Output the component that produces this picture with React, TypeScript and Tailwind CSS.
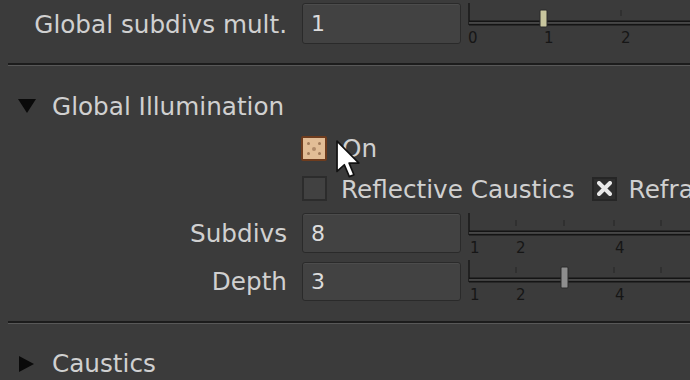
const font = "font-['DejaVu_Sans',sans-serif]";

function Separator() {
  return (
    <div className="ml-[8px]">
      <div className="h-[2px] bg-[#1c1c1c]" />
      <div className="h-[1px] bg-[#585858]" />
    </div>
  );
}

function NumField({ value, h }: { value: string; h: string }) {
  return (
    <div
      className={`ml-[15px] w-[159px] shrink-0 ${h} rounded-[3px] border border-[#2a2a2a] bg-[#424242] shadow-[inset_0_1px_0_#4c4c4c] flex items-center pl-[8px] text-[22px] text-[#dcdcdc]`}
    >
      {value}
    </div>
  );
}

function Slider({
  rail,
  ticks,
  labels,
  handle,
  handleColor,
}: {
  rail: number;
  ticks: number[];
  labels: [string, number][];
  handle?: [number, number, number];
  handleColor?: string;
}) {
  return (
    <svg width="222" height="44" className="ml-[6px] overflow-visible shrink-0">
      <line x1="2" y1={rail - 18} x2="2" y2={rail + 4} stroke="#1a1a1a" strokeWidth="1.5" />
      {ticks.map((t) => (
        <line key={t} x1={t} y1={rail - 11} x2={t} y2={rail - 5} stroke="#262626" strokeWidth="1" />
      ))}
      <rect x="2" y={rail - 0.5} width="230" height="1.6" fill="#141414" />
      <rect x="2" y={rail + 1.1} width="230" height="1.8" fill="#4a4a4a" />
      <rect x="2" y={rail + 2.9} width="230" height="1.6" fill="#141414" />
      {handle && (
        <rect
          x={handle[0]}
          y={handle[1]}
          width="7"
          height={handle[2]}
          rx="1"
          fill={handleColor}
          stroke="#2a2a2a"
          strokeWidth="1"
        />
      )}
      {labels.map(([l, x]) => (
        <text key={l} x={x} y={rail + 22} fontSize="15" fill="#161616" fontFamily="DejaVu Sans, sans-serif">
          {l}
        </text>
      ))}
    </svg>
  );
}

function OnBox() {
  return (
    <div className="w-[26px] h-[25px] shrink-0 rounded-[2px] border-2 border-[#6e3c1e] bg-[#e2bd96] relative">
      <span className="absolute left-[4px] top-[4px] w-[3px] h-[3px] rounded-full bg-[#a07a5a]" />
      <span className="absolute right-[4px] top-[4px] w-[3px] h-[3px] rounded-full bg-[#a07a5a]" />
      <span className="absolute left-[9px] top-[9px] w-[4px] h-[4px] rounded-full bg-[#b08a68]" />
      <span className="absolute left-[4px] bottom-[4px] w-[3px] h-[3px] rounded-full bg-[#a07a5a]" />
      <span className="absolute right-[4px] bottom-[4px] w-[3px] h-[3px] rounded-full bg-[#a07a5a]" />
    </div>
  );
}

function EmptyBox() {
  return <div className="w-[25px] h-[25px] shrink-0 border-2 border-[#2c2c2c] bg-[#414141]" />;
}

function XBox() {
  return (
    <div className="w-[25px] h-[24px] shrink-0 border-2 border-[#262626] bg-[#2e2e2e] flex items-center justify-center">
      <svg width="15" height="15" viewBox="0 0 15 15">
        <path d="M2 2 L13 13 M13 2 L2 13" stroke="#e8e8e8" strokeWidth="4" strokeLinecap="round" />
      </svg>
    </div>
  );
}

export default function App() {
  return (
    <div className={`relative w-[690px] h-[380px] overflow-hidden bg-[#3b3b3b] text-[#d0d0d0] ${font}`}>
      {/* global subdivs */}
      <div className="flex items-start h-[47px] pt-[3px]">
        <div className="w-[287px] shrink-0 h-[43px] flex items-center justify-end text-[24.7px] whitespace-nowrap">
          Global subdivs mult.
        </div>
        <NumField value="1" h="h-[41px]" />
        <Slider
          rail={18}
          ticks={[154]}
          labels={[
            ["0", 1],
            ["1", 77],
            ["2", 154],
          ]}
          handle={[73, 7, 17]}
          handleColor="#c8c69e"
        />
      </div>

      <div className="mt-[16px]">
        <Separator />
      </div>

      {/* GI header */}
      <div className="mt-[26px] h-[30px] flex items-center">
        <svg width="18" height="14" viewBox="0 0 18 14" className="ml-[18px] shrink-0 mt-[-2px]">
          <path d="M0 0 H18 L9 14 Z" fill="#0a0a0a" />
        </svg>
        <span className="ml-[16px] text-[24.7px]">Global Illumination</span>
      </div>

      <div className="mt-[13px] h-[26px] flex items-center pl-[301px]">
        <OnBox />
        <span className="ml-[15px] text-[24.7px] mt-[2px]">On</span>
      </div>

      <div className="mt-[15px] h-[25px] flex items-center pl-[302px] whitespace-nowrap">
        <EmptyBox />
        <span className="ml-[14px] text-[24.7px] mt-[2px]">Reflective Caustics</span>
        <div className="ml-[17px] shrink-0">
          <XBox />
        </div>
        <span className="ml-[12px] text-[24.7px] mt-[2px]">Refractive Caustics</span>
      </div>

      <div className="mt-[12px] flex items-start h-[40px]">
        <div className="w-[287px] shrink-0 h-[41px] flex items-center justify-end text-[24.7px]">Subdivs</div>
        <NumField value="8" h="h-[40px]" />
        <Slider
          rail={18}
          ticks={[49, 97, 147, 194]}
          labels={[
            ["1", 3],
            ["2", 49],
            ["4", 148],
          ]}
        />
      </div>

      <div className="mt-[9px] flex items-start h-[39px]">
        <div className="w-[287px] shrink-0 h-[40px] flex items-center justify-end text-[24.7px]">Depth</div>
        <NumField value="3" h="h-[39px]" />
        <Slider
          rail={16}
          ticks={[49, 97, 147, 194]}
          labels={[
            ["1", 3],
            ["2", 49],
            ["4", 148],
          ]}
          handle={[94, 5, 21]}
          handleColor="#8e8e8e"
        />
      </div>

      <div className="mt-[20px]">
        <Separator />
      </div>

      <div className="mt-[25px] h-[30px] flex items-center">
        <svg width="15" height="16" viewBox="0 0 15 16" className="ml-[19px] shrink-0">
          <path d="M0 0 L15 8 L0 16 Z" fill="#0a0a0a" />
        </svg>
        <span className="ml-[18px] text-[24.7px]">Caustics</span>
      </div>

      {/* mouse cursor */}
      <svg width="25" height="42" viewBox="0 0 12 20" className="absolute left-[336px] top-[140px]">
        <path
          d="M0.5 0.5 L0.5 15 L4 11.8 L6.4 17.5 L8.6 16.6 L6.3 11 L11 11 Z"
          fill="#ffffff"
          stroke="#111111"
          strokeWidth="0.8"
          strokeLinejoin="round"
        />
      </svg>
    </div>
  );
}
